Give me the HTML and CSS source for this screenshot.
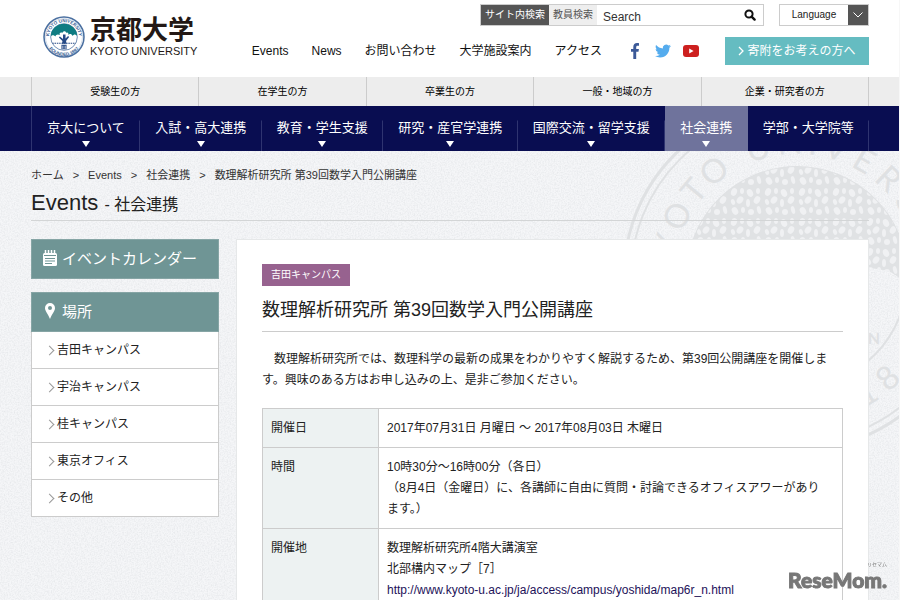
FILE: index.html
```html
<!DOCTYPE html>
<html lang="ja">
<head>
<meta charset="utf-8">
<meta name="viewport" content="width=device-width, initial-scale=1">
<title>数理解析研究所 第39回数学入門公開講座 — 京都大学</title>
<link rel="stylesheet" href="styles.css">
</head>
<body>
<header class="site-header">
  <div class="container header-inner">
    <a class="logo" href="#">
      <svg class="emblem" viewBox="0 0 82 82" aria-hidden="true">
        <defs>
          <path id="ring-top" d="M12 41a29 29 0 0 1 58 0"/>
          <path id="ring-bottom" d="M4 41a37 37 0 0 0 74 0"/>
          <clipPath id="emblem-disc"><circle cx="41" cy="41" r="26"/></clipPath>
        </defs>
        <circle cx="41" cy="41" r="39" fill="#fff" stroke="#4a6fa0" stroke-width="3"/>
        <circle cx="41" cy="41" r="36" fill="none" stroke="#a9bcd6" stroke-width="1"/>
        <circle cx="41" cy="41" r="26" fill="#fff" stroke="#4a6fa0" stroke-width="1.5"/>
        <g clip-path="url(#emblem-disc)">
          <path fill="#0f7c82" d="M15 15h52v24c-3-4-7-4-9 0-2-5-7-5-9-2 2-3-1-6-4-4 0-4-6-4-7 0-4-2-7 1-5 4-4-2-8-1-9 3-3-4-7-3-9 0z"/>
          <path fill="#264a86" d="M39 36h5v8l5-5 2 2-6 8 1 5h-9l1-5-7-7 2-2 6 5z"/>
          <path stroke="#264a86" stroke-width="2" stroke-dasharray="3 1.5" d="M18 53h46"/>
          <path fill="#264a86" d="M36 56h10v9H36z"/>
          <path stroke="#fff" stroke-width="1" d="M38 58v6M41 58v6M44 58v6"/>
        </g>
        <text class="emblem-text"><textPath href="#ring-top" startOffset="50%" text-anchor="middle">KYOTO UNIVERSITY</textPath></text>
        <text class="emblem-text"><textPath href="#ring-bottom" startOffset="50%" text-anchor="middle">FOUNDED 1897</textPath></text>
      </svg>
      <span class="logo-text"><span class="logo-ja">京都大学</span><span class="logo-en">KYOTO UNIVERSITY</span></span>
    </a>
    <div class="header-tools">
      <div class="tools-row">
        <form class="search" role="search">
          <button class="scope scope-on" type="button">サイト内検索</button>
          <button class="scope" type="button">教員検索</button>
          <input class="search-input" type="text" placeholder="Search" aria-label="Search">
          <button class="search-go" type="submit" aria-label="検索">
            <svg viewBox="0 0 12 12" width="12" height="12"><circle cx="5" cy="5" r="3.6" fill="none" stroke="#111" stroke-width="2"/><path d="M7.6 7.6l3 3" stroke="#111" stroke-width="2.4" stroke-linecap="round"/></svg>
          </button>
        </form>
        <button class="language" type="button"><span class="language-label">Language</span><span class="language-arrow"><svg viewBox="0 0 10 6" width="10" height="6"><path d="M.5.5L5 5 9.500.5" fill="none" stroke="#fff"/></svg></span></button>
      </div>
      <div class="tools-row">
        <nav class="utility">
          <a href="#">Events</a><a href="#">News</a><a href="#">お問い合わせ</a><a href="#">大学施設案内</a><a href="#">アクセス</a>
        </nav>
        <div class="social">
          <a href="#" aria-label="Facebook"><svg viewBox="0 0 16 16" width="16" height="16"><path fill="#3b5998" d="M6.300 16V8.700H4V6h2.300V4c0-2.600 1.500-3.900 3.700-3.900.900 0 1.700.1 2 .1v2.500h-1.300c-1.200 0-1.500.6-1.500 1.500V6h2.700l-.4 2.700H9.200V16z"/></svg></a>
          <a href="#" aria-label="Twitter"><svg viewBox="0 0 24 24" width="16" height="16"><path fill="#55acee" d="M23.950 4.570a10 10 0 0 1-2.820.77 4.960 4.960 0 0 0 2.160-2.720c-.95.550-2 .950-3.130 1.180a4.920 4.920 0 0 0-8.380 4.480C7.690 8.090 4.070 6.130 1.640 3.160a4.820 4.820 0 0 0-.67 2.470c0 1.710.87 3.210 2.190 4.100a4.900 4.900 0 0 1-2.230-.62v.06a4.920 4.920 0 0 0 3.950 4.830 5 5 0 0 1-2.210.080 4.940 4.940 0 0 0 4.600 3.420A9.870 9.870 0 0 1 0 19.540a13.990 13.990 0 0 0 7.550 2.210c9.050 0 14-7.500 14-13.980 0-.21 0-.42-.02-.63a9.940 9.940 0 0 0 2.460-2.550z"/></svg></a>
          <a href="#" aria-label="YouTube"><svg viewBox="0 0 16 12" width="16" height="12"><rect width="16" height="12" rx="3" fill="#cd201f"/><path fill="#fff" d="M6.200 3.500v5L10.600 6z"/></svg></a>
        </div>
        <a class="donate" href="#"><svg viewBox="0 0 6 10" width="6" height="10"><path d="M1 1l4 4-4 4" fill="none" stroke="#fff" stroke-width="1.300"/></svg>寄附をお考えの方へ</a>
      </div>
    </div>
  </div>
</header>

<nav class="audience">
  <div class="container audience-inner">
    <a href="#">受験生の方</a><a href="#">在学生の方</a><a href="#">卒業生の方</a><a href="#">一般・地域の方</a><a href="#">企業・研究者の方</a>
  </div>
</nav>

<nav class="global">
  <div class="container global-inner">
    <a class="has-menu" href="#">京大について</a><a class="has-menu" href="#">入試・高大連携</a><a class="has-menu" href="#">教育・学生支援</a><a class="has-menu" href="#">研究・産官学連携</a><a class="has-menu" href="#">国際交流・留学支援</a><a class="has-menu current" href="#">社会連携</a><a href="#">学部・大学院等</a>
  </div>
</nav>

<div class="page">
  <svg class="texture" aria-hidden="true">
    <filter id="grain" x="0" y="0" width="100%" height="100%">
      <feTurbulence type="fractalNoise" baseFrequency=".7" numOctaves="2" seed="4"/>
      <feColorMatrix values="0 0 0 0 .5  0 0 0 0 .53  0 0 0 0 .56  .5 0 0 0 -.18"/>
    </filter>
    <rect width="100%" height="100%" filter="url(#grain)"/>
  </svg>
  <svg class="seal" viewBox="-175 -175 350 350" aria-hidden="true">
    <defs>
      <pattern id="leaves" width="34" height="30" patternUnits="userSpaceOnUse">
        <rect width="34" height="30" fill="#e0e2e4"/>
        <g fill="#f0f1f3">
          <ellipse cx="5" cy="5" rx="3" ry="4" transform="rotate(20 5 5)"/><ellipse cx="13" cy="4" rx="2" ry="3"/>
          <ellipse cx="21" cy="6" rx="3" ry="4" transform="rotate(-25 21 6)"/><ellipse cx="29" cy="4" rx="2" ry="3"/>
          <ellipse cx="4" cy="15" rx="2" ry="3" transform="rotate(-20 4 15)"/><ellipse cx="11" cy="13" rx="3" ry="4" transform="rotate(35 11 13)"/>
          <ellipse cx="19" cy="16" rx="2" ry="4"/><ellipse cx="28" cy="13" rx="3" ry="4" transform="rotate(30 28 13)"/>
          <ellipse cx="6" cy="24" rx="3" ry="4" transform="rotate(-30 6 24)"/><ellipse cx="14" cy="23" rx="2" ry="3"/>
          <ellipse cx="22" cy="25" rx="3" ry="3"/><ellipse cx="30" cy="23" rx="2" ry="4" transform="rotate(-15 30 23)"/>
        </g>
      </pattern>
    </defs>
    <g fill="none" stroke="#dfe1e3">
      <circle r="173" stroke-width="3"/><circle r="166" stroke-width="2"/><circle r="110" stroke-width="2"/>
    </g>
    <path fill="url(#leaves)" d="M-110 -4A110 110 0 0 1 110 4C102 4 98 -6 86 -7 72 -9 66 -12 60 -4z"/>
    <g class="seal-text">
      <text transform="rotate(-89) translate(0 -123)">K</text><text transform="rotate(-76) translate(0 -123)">Y</text>
      <text transform="rotate(-63) translate(0 -123)">O</text><text transform="rotate(-50) translate(0 -123)">T</text>
      <text transform="rotate(-38) translate(0 -123)">O</text><text transform="rotate(-17) translate(0 -123)">U</text>
      <text transform="rotate(-3) translate(0 -123)">N</text><text transform="rotate(7) translate(0 -123)">I</text>
      <text transform="rotate(17) translate(0 -123)">V</text><text transform="rotate(30) translate(0 -123)">E</text>
      <text transform="rotate(43) translate(0 -123)">R</text><text transform="rotate(56) translate(0 -123)">S</text>
      <text transform="rotate(-42) translate(0 147)">8</text><text transform="rotate(-31) translate(0 147)">1</text>
      <text class="seal-small" x="77" y="67">N</text>
    </g>
  </svg>

  <div class="container page-inner">
    <nav class="breadcrumb" aria-label="パンくず">
      <a href="#">ホーム</a><span>&gt;</span><a href="#">Events</a><span>&gt;</span><a href="#">社会連携</a><span>&gt;</span><span>数理解析研究所 第39回数学入門公開講座</span>
    </nav>
    <h1 class="page-title">Events <small>- 社会連携</small></h1>

    <div class="columns">
      <aside class="sidebar">
        <a class="side-head" href="#">
          <svg viewBox="0 0 14 16" width="14" height="16" aria-hidden="true"><rect y="3" width="14" height="13" rx="1.500" fill="#fff"/><path d="M2.500 0v4M5.500 0v4M8.500 0v4M11.500 0v4" stroke="#fff" stroke-width="1.500"/><path d="M1 5.500h12M2 8.500h10M2 11h10M2 13.500h7" stroke="#6f9595"/></svg>イベントカレンダー</a>
        <section class="side-box">
          <h2 class="side-head">
            <svg viewBox="0 0 14 16" width="14" height="16" aria-hidden="true"><path fill="#fff" fill-rule="evenodd" d="M7 0a5 5 0 0 1 5 5c0 3-3 6-5 11C5 11 2 8 2 5a5 5 0 0 1 5-5zm0 3a2 2 0 1 0 0 4 2 2 0 0 0 0-4z"/></svg>場所</h2>
          <ul class="side-list">
            <li><a href="#">吉田キャンパス</a></li>
            <li><a href="#">宇治キャンパス</a></li>
            <li><a href="#">桂キャンパス</a></li>
            <li><a href="#">東京オフィス</a></li>
            <li><a href="#">その他</a></li>
          </ul>
        </section>
      </aside>

      <main class="card">
        <span class="tag">吉田キャンパス</span>
        <h2 class="card-title">数理解析研究所 第39回数学入門公開講座</h2>
        <p class="lead">　数理解析研究所では、数理科学の最新の成果をわかりやすく解説するため、第39回公開講座を開催しま<br>す。興味のある方はお申し込みの上、是非ご参加ください。</p>
        <table class="details">
          <tbody>
            <tr><th scope="row">開催日</th><td>2017年07月31日 月曜日 ～ 2017年08月03日 木曜日</td></tr>
            <tr><th scope="row">時間</th><td>10時30分～16時00分（各日）<br>（8月4日（金曜日）に、各講師に自由に質問・討論できるオフィスアワーがあり<br>ます。）</td></tr>
            <tr><th scope="row">開催地</th><td>数理解析研究所4階大講演室<br>北部構内マップ［7］<br><a href="#">http://www.kyoto-u.ac.jp/ja/access/campus/yoshida/map6r_n.html</a></td></tr>
          </tbody>
        </table>
      </main>
    </div>
  </div>
</div>

<div class="watermark"><span class="watermark-kana">リセマム</span><span class="watermark-name">ReseMom.</span></div>
</body>
</html>
```
FILE: styles.css
```css
* { box-sizing: border-box; }

body {
  margin: 0;
  padding-right: 1px;
  background: #f7f7f7;
  color: #222;
  font: 12px/21px "Liberation Sans", "Noto Sans CJK JP", sans-serif;
}

a { color: inherit; text-decoration: none; }
button { font: inherit; border: 0; padding: 0; cursor: pointer; }
h1, h2, p, ul { margin: 0; padding: 0; font-weight: 400; }
svg { flex: none; }

.container { margin: 0 30px 0 31px; }

/* header */
.site-header { background: #fff; }
.header-inner {
  display: flex;
  justify-content: space-between;
  padding-bottom: 12px;
}
.logo { display: flex; gap: 5px; padding: 16px 0 0 12px; }
.emblem { width: 42px; height: 42px; }
.emblem-text { font: 700 9px "Liberation Sans", sans-serif; fill: #3a5f95; }
.logo-text { display: flex; flex-direction: column; color: #231815; }
.logo-ja { font-size: 26px; line-height: 28px; font-weight: 700; }
.logo-en { font-size: 11px; line-height: 14px; }
.header-tools { display: flex; flex-direction: column; align-items: flex-end; gap: 11px; padding-top: 4px; }
.tools-row { display: flex; align-items: center; }

.search { display: flex; width: 284px; height: 22px; border: 1px solid #ccc; background: #fff; }
.scope { padding: 0 4px; background: #eee; color: #555; font-size: 10px; line-height: 20px; white-space: nowrap; }
.scope-on { background: #555; color: #fff; }
.search-input {
  flex: 1;
  min-width: 0;
  border: 0;
  padding: 4px 6px 0;
  background: none;
  font: inherit;
  color: #222;
}
.search-input::placeholder { color: #333; opacity: 1; }
.search-go { width: 26px; background: none; display: flex; align-items: center; justify-content: center; }

.language { display: flex; height: 22px; margin-left: 15px; border: 1px solid #ccc; background: #fff; font-size: 10px; line-height: 20px; color: #222; }
.language-label { width: 68px; text-align: center; }
.language-arrow { display: flex; align-items: center; justify-content: center; width: 20px; background: #555; }

.utility { display: flex; gap: 23px; color: #111; white-space: nowrap; }
.social { display: flex; align-items: center; gap: 12px; margin: 0 26px 0 25px; }
.social a { display: flex; }
.donate {
  display: flex;
  align-items: center;
  justify-content: center;
  gap: 3px;
  width: 144px;
  height: 28px;
  background: #65bcc1;
  color: #fff;
}

/* visitor groups */
.audience { background: #ededed; font-size: 10px; line-height: 29px; color: #000; }
.audience-inner { display: grid; grid-template-columns: repeat(5, 1fr); border-left: 1px solid #ccc; }
.audience a { border-right: 1px solid #ccc; text-align: center; }

/* main navigation */
.global { background: #090d51; color: #fff; font-size: 13px; }
.global-inner { display: flex; }
.global a {
  flex: 1 1 auto;
  height: 45px;
  padding-top: 12px;
  text-align: center;
  line-height: 20px;
  white-space: nowrap;
  background: linear-gradient(transparent 14px, #2f3470 15px) right / 1px 100% no-repeat;
}
.global a:first-child { border-left: 1px solid #2f3470; }
.global .current { background: #6f739c; }
.has-menu::after {
  content: "";
  display: block;
  width: 0;
  margin: 3px auto 0;
  border: solid transparent;
  border-width: 6px 4px 0;
  border-top-color: #fff;
}

/* page ground */
.page { position: relative; overflow: hidden; background: #f5f6f8; }
.texture { position: absolute; inset: 0; width: 100%; height: 100%; }
.seal { position: absolute; top: -49px; right: -73px; width: 350px; height: 350px; }
.seal-text { font: 400 33px Lato, sans-serif; fill: #dfe1e3; text-anchor: middle; }
.seal-small { font-size: 16px; font-weight: 700; }
.page-inner { position: relative; }

.breadcrumb { display: flex; gap: 9px; padding-top: 14px; font-size: 11px; color: #333; }
.page-title {
  padding-bottom: 1px;
  border-bottom: 1px solid #d3d5d6;
  font-size: 22px;
  line-height: 33px;
}
.page-title small { font-size: 16px; line-height: 16px; }

.columns { display: grid; grid-template-columns: 188px 1fr; gap: 17px; align-items: start; padding-top: 18px; }

/* sidebar */
.side-head {
  display: flex;
  align-items: center;
  gap: 5px;
  height: 40px;
  padding: 0 11px 2px;
  border: 1px solid #86a5a5;
  background: #6f9595;
  color: #fff;
  font-size: 15px;
}
.side-box { margin-top: 13px; }
.side-list { list-style: none; background: #fff; border: solid #ccc; border-width: 0 1px; }
.side-list a { display: flex; align-items: center; height: 37px; padding-left: 14px; border-bottom: 1px solid #ccc; }
.side-list a::before {
  content: "";
  width: 6px;
  height: 6px;
  margin-right: 4px;
  border: solid #999;
  border-width: 1px 1px 0 0;
  transform: rotate(45deg);
}

/* article */
.card { padding: 24px 25px 40px; border: 1px solid #e6e8e9; background: #fff; }
.tag { display: inline-block; padding: 0 9px; background: #97628f; color: #fff; font-size: 10px; line-height: 22px; }
.card-title { padding: 9px 0 6px; border-bottom: 1px solid #ccc; font-size: 18px; line-height: 30px; }
.lead { padding: 17px 0; }
.details { width: 100%; border-collapse: collapse; }
.details th, .details td { padding: 9px 8px 8px; border: 1px solid #ccc; text-align: left; vertical-align: top; font-weight: 400; }
.details th { width: 20%; background: #edf2f2; }
.details a { color: #1d1259; }

.watermark {
  position: fixed;
  right: 13px;
  bottom: 7px;
  display: flex;
  flex-direction: column;
  color: #777;
}
.watermark-kana { align-self: flex-end; font-size: 5px; line-height: 6px; }
.watermark-name { font: 900 21px/26px Lato, sans-serif; -webkit-text-stroke: 1px #777; }
```
